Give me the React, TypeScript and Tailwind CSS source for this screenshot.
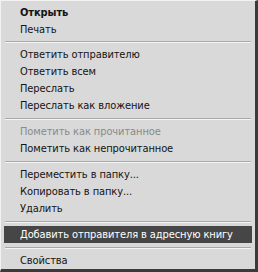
type Item = { label: string; bold?: boolean; disabled?: boolean; active?: boolean };

const groups: Item[][] = [
  [{ label: "Открыть", bold: true }, { label: "Печать" }],
  [
    { label: "Ответить отправителю" },
    { label: "Ответить всем" },
    { label: "Переслать" },
    { label: "Переслать как вложение" },
  ],
  [{ label: "Пометить как прочитанное", disabled: true }, { label: "Пометить как непрочитанное" }],
  [{ label: "Переместить в папку..." }, { label: "Копировать в папку..." }, { label: "Удалить" }],
  [{ label: "Добавить отправителя в адресную книгу", active: true }],
  [{ label: "Свойства" }],
];

function Row({ item }: { item: Item }) {
  return (
    <div
      className={`h-[17px] flex items-center pl-[16px] ${
        item.active ? "bg-[#464646] text-white" : item.disabled ? "text-[#8a8a8a]" : "text-[#141414]"
      } ${item.bold ? "font-bold" : ""}`}
    >
      {item.label}
    </div>
  );
}

export default function App() {
  return (
    <div className="w-[258px] h-[272px] bg-[#d9d9d9] border-t border-l border-t-[#f2f2f2] border-l-[#f2f2f2] border-r-[3px] border-b-[3px] border-r-[#3a3a3a] border-b-[#3a3a3a] pt-[3px] px-[3px] text-[11px] leading-none tracking-[-0.1px] font-['DejaVu_Sans_Condensed','DejaVu_Sans',sans-serif] overflow-hidden">
      {groups.map((g, gi) => (
        <div key={gi}>
          {gi > 0 && (
            <div className={`${gi === 1 ? "h-[8px]" : "h-[9px]"} flex items-center px-[1px]`}>
              <div className="w-full border-t border-t-[#a9a9a9] border-b border-b-[#f4f4f4]" />
            </div>
          )}
          {g.map((item) => (
            <Row key={item.label} item={item} />
          ))}
        </div>
      ))}
    </div>
  );
}
